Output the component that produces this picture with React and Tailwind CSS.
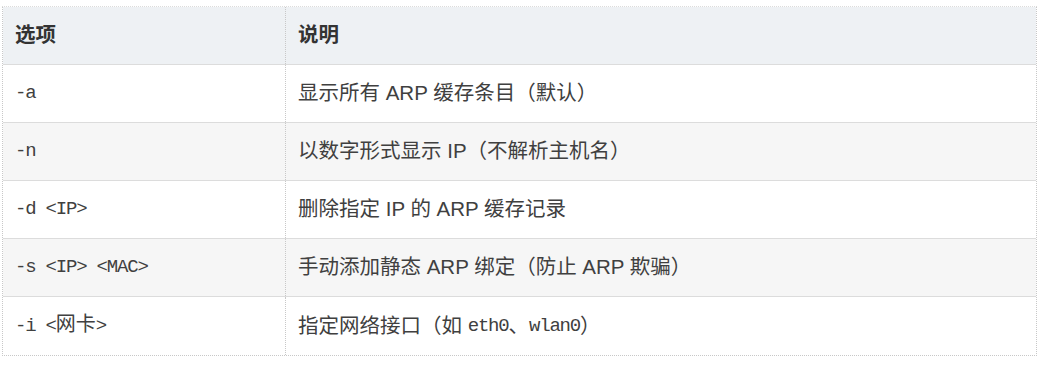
import React from "react";

const rows = [
  { opt: "-a", desc: <>显示所有 ARP 缓存条目（默认）</> },
  { opt: "-n", desc: <>以数字形式显示 IP（不解析主机名）</> },
  { opt: "-d <IP>", desc: <>删除指定 IP 的 ARP 缓存记录</> },
  { opt: "-s <IP> <MAC>", desc: <>手动添加静态 ARP 绑定（防止 ARP 欺骗）</> },
  {
    opt: (
      <>
        -i &lt;<span className="text-[20px] tracking-normal">网卡</span>&gt;
      </>
    ),
    desc: (
      <>
        指定网络接口（如 <Mono>eth0</Mono>、<Mono>wlan0</Mono>）
      </>
    ),
  },
];

function Mono({ children }) {
  return (
    <span className="font-['Liberation_Mono','Noto_Sans_CJK_SC',monospace] text-[19px] tracking-[-1.2px]">
      {children}
    </span>
  );
}

const App = () => {
  return (
    <div className="w-[1048px] h-[365px] bg-white pt-[6px] pl-[2px] font-['Liberation_Sans','Noto_Sans_CJK_SC',sans-serif]">
      <div className="w-[1035px] border-t border-t-[#dcdcdc] border-x border-b border-dotted border-x-[#c8c8c8] border-b-[#c8c8c8]">
        <div className="flex h-[58px] bg-[#eef1f4] border-b border-solid border-[#dcdcdc] text-[20.5px] font-bold text-[#333]">
          <div className="w-[283px] shrink-0 flex items-center px-3 border-r border-dotted border-[#c8c8c8]">
            选项
          </div>
          <div className="flex-1 flex items-center px-3">说明</div>
        </div>
        {rows.map((row, i) => (
          <div
            key={i}
            className={`flex h-[58px] text-[20.5px] text-[#404040] ${
              i % 2 === 1 ? "bg-[#f6f6f6]" : "bg-white"
            } ${i < rows.length - 1 ? "border-b border-solid border-[#dcdcdc]" : "h-[57px]"}`}
          >
            <div className="w-[283px] shrink-0 flex items-center px-3 border-r border-dotted border-[#c8c8c8] whitespace-pre">
              <Mono>{row.opt}</Mono>
            </div>
            <div className="flex-1 flex items-center px-3 whitespace-pre">
              {row.desc}
            </div>
          </div>
        ))}
      </div>
    </div>
  );
};

export default App;
